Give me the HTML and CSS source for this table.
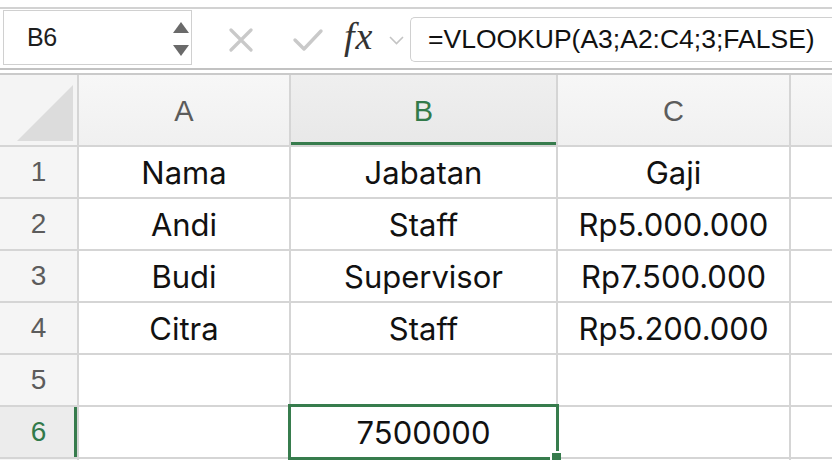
FILE: index.html
```html
<!DOCTYPE html>
<html>
<head>
<meta charset="utf-8">
<link rel="stylesheet" href="styles.css">
</head>
<body>
<div class="app">
  <div class="toolbar">
    <div class="namebox">
      <span class="ref">B6</span>
      <div class="spin">
        <svg width="16" height="11" viewBox="0 0 16 11"><polygon points="8,0 16,11 0,11" fill="#6a6a6a"/></svg>
        <svg width="16" height="11" viewBox="0 0 16 11"><polygon points="0,0 16,0 8,11" fill="#6a6a6a"/></svg>
      </div>
    </div>
    <div class="actions">
      <svg class="ico-x" width="26" height="24" viewBox="0 0 26 24"><path d="M3 2 L23 22 M23 2 L3 22" stroke="#c9c9c9" stroke-width="3.2" stroke-linecap="round"/></svg>
      <svg class="ico-check" width="32" height="24" viewBox="0 0 32 24"><path d="M3 12 L12 21 L29 3" stroke="#c9c9c9" stroke-width="3.4" fill="none" stroke-linecap="round" stroke-linejoin="round"/></svg>
      <span class="fx">fx</span>
      <svg class="ico-chev" width="15" height="9" viewBox="0 0 15 9"><path d="M1 1 L7.5 7.5 L14 1" stroke="#c4c4c4" stroke-width="1.6" fill="none"/></svg>
    </div>
    <div class="formula">=VLOOKUP(A3;A2:C4;3;FALSE)</div>
  </div>
  <div class="sheet">
    <div class="corner"><div class="tri"></div></div>
    <div class="colhdr">A</div>
    <div class="colhdr active">B</div>
    <div class="colhdr">C</div>
    <div class="colhdr"></div>

    <div class="rowhdr">1</div>
    <div class="cell">Nama</div>
    <div class="cell">Jabatan</div>
    <div class="cell">Gaji</div>
    <div class="cell"></div>

    <div class="rowhdr">2</div>
    <div class="cell">Andi</div>
    <div class="cell">Staff</div>
    <div class="cell">Rp5.000.000</div>
    <div class="cell"></div>

    <div class="rowhdr">3</div>
    <div class="cell">Budi</div>
    <div class="cell">Supervisor</div>
    <div class="cell">Rp7.500.000</div>
    <div class="cell"></div>

    <div class="rowhdr">4</div>
    <div class="cell">Citra</div>
    <div class="cell">Staff</div>
    <div class="cell">Rp5.200.000</div>
    <div class="cell"></div>

    <div class="rowhdr">5</div>
    <div class="cell"></div>
    <div class="cell"></div>
    <div class="cell"></div>
    <div class="cell"></div>

    <div class="rowhdr active">6</div>
    <div class="cell"></div>
    <div class="cell selected">7500000</div>
    <div class="cell"></div>
    <div class="cell"></div>

    <div class="rowhdr"></div>
    <div class="cell"></div>
    <div class="cell"></div>
    <div class="cell"></div>
    <div class="cell"></div>
  </div>
</div>
</body>
</html>
```
FILE: styles.css
```css
html, body {
  margin: 0;
  padding: 0;
  background: #ffffff;
  overflow: hidden;
}
.app {
  width: 832px;
  height: 460px;
  overflow: hidden;
  padding-top: 7px;
  box-sizing: border-box;
  font-family: "Liberation Sans", Arial, sans-serif;
}
.toolbar {
  border-top: 2px solid #d2d2d2;
  border-bottom: 2px solid #c2c2c2;
  height: 59px;
  display: flex;
  align-items: flex-start;
  background: #ffffff;
}
.namebox {
  margin: 1px 0 0 3px;
  width: 189px;
  height: 55px;
  border: 1px solid #d0d0d0;
  box-sizing: border-box;
  display: flex;
  align-items: center;
  justify-content: space-between;
  padding: 0 2px 0 23px;
  flex: none;
}
.ref {
  font-size: 25px;
  color: #1e1e1e;
  letter-spacing: -0.5px;
}
.spin {
  display: flex;
  flex-direction: column;
  gap: 12px;
  padding-top: 2px;
}
.spin svg { display: block; }
.actions {
  display: flex;
  align-items: center;
  height: 57px;
  padding-left: 36px;
  width: 218px;
  box-sizing: border-box;
  flex: none;
}
.ico-x { margin-top: 4px; flex: none; }
.ico-check { margin-left: 38px; margin-top: 4px; flex: none; }
.fx {
  font-family: "Liberation Serif", "Times New Roman", serif;
  font-style: italic;
  font-size: 38px;
  color: #333;
  margin-left: 20px;
  margin-top: -3px;
  letter-spacing: 1px;
  width: 34px;
  flex: none;
}
.ico-chev { margin-left: 11px; margin-top: 6px; flex: none; }
.formula {
  margin-top: 8px;
  flex: 1;
  height: 45px;
  border: 1px solid #d0d0d0;
  border-right: none;
  border-radius: 5px 0 0 5px;
  box-sizing: border-box;
  padding-left: 17px;
  display: flex;
  align-items: center;
  font-size: 26.5px;
  color: #111;
  white-space: nowrap;
  overflow: hidden;
}
.sheet {
  margin-top: 3px;
  display: grid;
  grid-template-columns: 77px 210px 265px 231px 1fr;
  grid-template-rows: 70px repeat(7, 50px);
  gap: 2px;
  background: #d5d5d5;
  border-top: 2px solid #cacaca;
}
.corner {
  background: #f4f4f4;
  position: relative;
}
.tri {
  position: absolute;
  right: 4px;
  bottom: 4px;
  width: 56px;
  height: 56px;
  background: #dcdcdc;
  clip-path: polygon(100% 0, 100% 100%, 0 100%);
}
.colhdr {
  background: linear-gradient(#f7f7f7, #f0f0f0);
  display: flex;
  align-items: center;
  justify-content: center;
  font-size: 29px;
  color: #5c5c5c;
  padding-top: 2px;
}
.colhdr.active {
  background: linear-gradient(#efefef, #e8e8e8);
  color: #327a4a;
  box-shadow: inset 0 -3px 0 #377c4d;
}
.rowhdr {
  background: #f5f5f5;
  display: flex;
  align-items: center;
  justify-content: center;
  font-size: 28px;
  color: #5c5c5c;
}
.rowhdr.active {
  background: #ececec;
  color: #327a4a;
  box-shadow: inset -3px 0 0 #377c4d;
}
.cell {
  background: #ffffff;
  display: flex;
  align-items: center;
  justify-content: center;
  font-family: "Inter", sans-serif;
  font-size: 31px;
  color: #111;
  padding-top: 1px;
}
.cell.selected {
  position: relative;
  z-index: 1;
  outline: 3px solid #377c4d;
  outline-offset: 0;
}
.cell.selected::after {
  content: "";
  position: absolute;
  right: -5px;
  bottom: -5px;
  width: 9px;
  height: 9px;
  background: #377c4d;
  border-left: 2px solid #fff;
  border-top: 2px solid #fff;
}
```
